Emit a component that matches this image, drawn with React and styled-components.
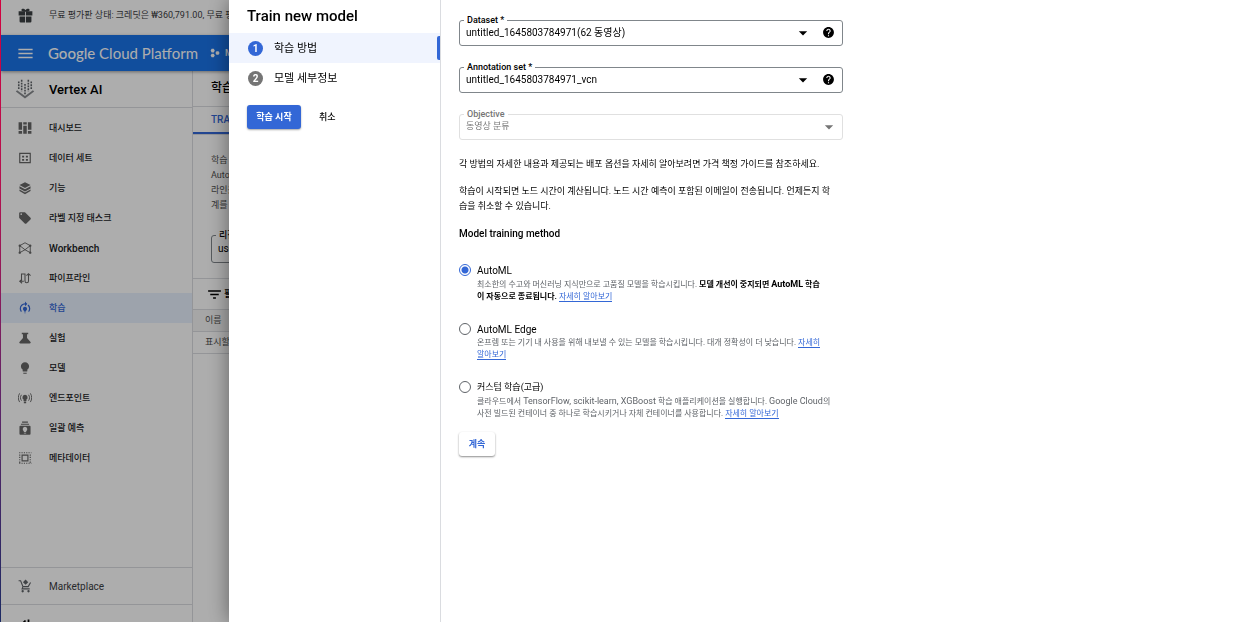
import { useState } from "react";
import styled, { createGlobalStyle } from "styled-components";
import {
  MdArrowDropDown,
  MdFilterList,
  MdHelp,
  MdLightbulb,
  MdLocalOffer,
  MdMenu,
  MdModelTraining,
} from "react-icons/md";

const GiftIcon = () => (
  <Svg viewBox="0 0 24 24">
    <path d="M1 5h10.300v7H1zM12.700 5H23v7H12.700zM2.500 13.500h8.800V23h-7a2 2 0 0 1-1.800-2zM12.700 13.500h8.800V21a2 2 0 0 1-1.800 2h-7z" />
    <path d="M12 6C8 6 5 5 5.500 2.800S10 .8 12 3.500c2-2.700 6-2.900 6.500-.7S16 6 12 6z" />
  </Svg>
);

const ProjectIcon = () => (
  <Svg viewBox="0 0 24 24">
    <path d="M4 2h5l2.500 4.200L9 10.500H4L1.500 6.200zM4 13.500h5l2.500 4.200L9 22H4l-2.500-4.300zM15.500 7.500h5l2.500 4.400-2.500 4.300h-5L13 11.900z" />
  </Svg>
);

const VertexIcon = () => (
  <Svg viewBox="0 0 24 24">
    <path
      d="M4.500 3v10M8 1v14M12 6v13M16 1v14M19.500 3v10"
      fill="none"
      stroke="currentColor"
      strokeWidth="1.900"
      strokeDasharray="2.200 1.200"
    />
    <path d="M1 15l11 8.500L23 15l-1.500-1.500L12 20.500l-9.500-7z" opacity=".75" />
  </Svg>
);

const DashboardIcon = () => (
  <Svg viewBox="0 0 24 24">
    <path d="M1 2h6v13H1zM1 17h6v5H1zM9 2h6v4H9zM9 8h6v14H9zM17 2h6v13h-6zM17 17h6v5h-6z" />
  </Svg>
);

const DatasetIcon = () => (
  <Svg viewBox="0 0 24 24">
    <path d="M2 3h20v18H2zM4 5v14h16V5z" fillRule="evenodd" />
    <path d="M7 8h3.500v3H7zM13.500 8H17v3h-3.500zM7 13.500h3.500v3H7zM13.500 13.500H17v3h-3.500z" />
  </Svg>
);

const FeatureIcon = () => (
  <Svg viewBox="0 0 24 24">
    <path d="M12 2l9.500 5-9.500 5.200L2.500 7z" />
    <path d="M2.500 9l9.500 5.200L21.500 9v3.800L12 18l-9.500-5.200zM2.500 14.500l9.500 5 9.500-5v2.800L12 22.500l-9.500-5.200z" />
  </Svg>
);

const WorkbenchIcon = () => (
  <Svg viewBox="0 0 24 24">
    <g fill="none" stroke="currentColor" strokeWidth="1.600">
      <path d="M3 8l9-5 9 5v12l-9-5-9 5zM3 8l9 7 9-7" />
    </g>
    <circle cx="3" cy="8" r="2" />
    <circle cx="21" cy="8" r="2" />
    <circle cx="3" cy="20" r="2" />
    <circle cx="21" cy="20" r="2" />
  </Svg>
);

const PipelineIcon = () => (
  <Svg viewBox="0 0 24 24">
    <g fill="none" stroke="currentColor" strokeWidth="1.800">
      <path d="M6 17V5h6v12a3 3 0 0 0 6 0V5M14.500 8L18 4.500 21.500 8M7 14l-4 3.500L7 21M3 17.500h7" />
    </g>
  </Svg>
);

const FlaskIcon = () => (
  <Svg viewBox="0 0 24 24">
    <path d="M6.500 3h11v2.500h-2V12l6 7c.8 1.200 0 2.500-1.500 2.500H4c-1.500 0-2.300-1.300-1.500-2.500l6-7V5.500h-2z" />
  </Svg>
);

const EndpointIcon = () => (
  <Svg viewBox="0 0 24 24">
    <path d="M12 6.500a4.500 4.500 0 0 0-2.500 8.200V17h5v-2.300A4.500 4.500 0 0 0 12 6.500zM10 18h4v3h-4z" />
    <g fill="none" stroke="currentColor" strokeWidth="1.600">
      <path d="M6 6.500c-2.400 3-2.400 7 0 10M18 6.500c2.400 3 2.400 7 0 10M2.800 4c-3 4.500-3 10.500 0 15M21.200 4c3 4.500 3 10.500 0 15" />
    </g>
  </Svg>
);

const BatchIcon = () => (
  <Svg viewBox="0 0 24 24">
    <path d="M7 1h10v2H7zM5 4.500h14v2H5z" />
    <path
      fillRule="evenodd"
      d="M4 8h16a1.500 1.500 0 0 1 1.500 1.500V22a1.500 1.500 0 0 1-1.500 1.500H4A1.500 1.500 0 0 1 2.500 22V9.500A1.500 1.500 0 0 1 4 8zm8 2a4 4 0 0 0-2 7.400V19h4v-1.600A4 4 0 0 0 12 10zM10 20v1.500h4V20z"
    />
  </Svg>
);

const MetadataIcon = () => (
  <Svg viewBox="0 0 24 24" fill="none" stroke="currentColor" strokeWidth="2">
    <path d="M7 7h10v10H7z" />
    <path d="M2 3h21M2 21h21M3 6v14M21 6v14" strokeDasharray="2 2" />
  </Svg>
);

const CartIcon = () => (
  <Svg viewBox="0 0 24 24">
    <path
      d="M1 3h3.500l4 10h9l4-7M8.500 13L7 17h13"
      fill="none"
      stroke="currentColor"
      strokeWidth="1.900"
    />
    <path d="M13 1l4.500 4.500L13 10 8.500 5.500z" />
    <circle cx="8" cy="21" r="2" />
    <circle cx="18" cy="21" r="2" />
  </Svg>
);

const CollapseIcon = () => (
  <Svg viewBox="0 0 24 24" fill="none" stroke="currentColor" strokeWidth="3.500">
    <path d="M13 3l-9 9 9 9M19 1v22" />
  </Svg>
);

const navItems = [
  { label: "대시보드", icon: DashboardIcon },
  { label: "데이터 세트", icon: DatasetIcon },
  { label: "기능", icon: FeatureIcon },
  { label: "라벨 지정 태스크", icon: MdLocalOffer },
  { label: "Workbench", icon: WorkbenchIcon, latin: true },
  { label: "파이프라인", icon: PipelineIcon },
  { label: "학습", icon: MdModelTraining, active: true },
  { label: "실험", icon: FlaskIcon },
  { label: "모델", icon: MdLightbulb },
  { label: "엔드포인트", icon: EndpointIcon },
  { label: "일괄 예측", icon: BatchIcon },
  { label: "메타데이터", icon: MetadataIcon },
];

const SelectField = ({ id, label, value, help, disabled }) => (
  <Field $disabled={disabled}>
    <FieldLabel htmlFor={id}>{label}</FieldLabel>
    <Select id={id} disabled={disabled} defaultValue={value}>
      <option>{value}</option>
    </Select>
    <MdArrowDropDown size={20} />
    {help && (
      <HelpButton type="button" aria-label={`${label} help`}>
        <MdHelp size={13} />
      </HelpButton>
    )}
  </Field>
);

const MethodOption = ({ id, title, latin, checked, onSelect, children }) => (
  <Option>
    <Radio type="radio" name="method" id={id} checked={checked} onChange={() => onSelect(id)} />
    <div>
      <OptionTitle htmlFor={id} $latin={latin}>{title}</OptionTitle>
      <Description>{children}</Description>
    </div>
  </Option>
);

const Console = () => (
  <ConsolePage>
    <PromoBar>
      <IconSlot><GiftIcon /></IconSlot>
      <span>무료 평가판 상태: 크레딧은 ₩360,791.00, 무료 평가판</span>
    </PromoBar>
    <TopBar>
      <MenuButton type="button" aria-label="menu"><MdMenu size={19} /></MenuButton>
      <Logo href="#"><b>Google</b> Cloud Platform</Logo>
      <Project type="button"><ProjectIcon /> My</Project>
    </TopBar>
    <Body>
      <Sidebar>
        <ProductName>
          <IconSlot $size={20}><VertexIcon /></IconSlot>
          Vertex AI
        </ProductName>
        <NavList>
          {navItems.map(({ label, icon: Icon, active, latin }) => (
            <NavLink key={label} href="#" $active={active} $latin={latin}>
              <IconSlot><Icon /></IconSlot>
              {label}
            </NavLink>
          ))}
        </NavList>
        <Marketplace href="#">
          <IconSlot><CartIcon /></IconSlot>
          Marketplace
        </Marketplace>
        <CollapseButton type="button" aria-label="collapse">
          <CollapseIcon />
        </CollapseButton>
      </Sidebar>
      <Content>
        <PageTitle>학습</PageTitle>
        <Tabs><Tab type="button">TRAINING</Tab></Tabs>
        <Intro>학습<br />AutoML<br />라인을<br />계를</Intro>
        <Region>
          <FieldLabel htmlFor="region">리전</FieldLabel>
          <Select id="region" defaultValue="us-central1">
            <option>us-central1</option>
          </Select>
        </Region>
        <Filter><MdFilterList size={17} /> 필터</Filter>
        <Table>
          <thead><tr><th>이름</th></tr></thead>
          <tbody><tr><td>표시할</td></tr></tbody>
        </Table>
      </Content>
    </Body>
  </ConsolePage>
);

const App = () => {
  const [method, setMethod] = useState("automl");

  return (
    <>
      <GlobalStyle />
      <Screen>
        <Edge />
        <Console />
      </Screen>
      <Scrim />
      <Dialog role="dialog" aria-labelledby="dialog-title">
        <Steps>
          <DialogTitle id="dialog-title">Train new model</DialogTitle>
          <Step type="button" $active>
            <StepNumber $active>1</StepNumber>
            학습 방법
          </Step>
          <Step type="button">
            <StepNumber>2</StepNumber>
            모델 세부정보
          </Step>
          <Actions>
            <StartButton type="button">학습 시작</StartButton>
            <CancelButton type="button">취소</CancelButton>
          </Actions>
        </Steps>
        <Form onSubmit={(ev) => ev.preventDefault()}>
          <Fields>
            <SelectField id="dataset" label="Dataset *" value="untitled_1645803784971(62 동영상)" help />
            <SelectField id="annotation" label="Annotation set *" value="untitled_1645803784971_vcn" help />
            <SelectField id="objective" label="Objective" value="동영상 분류" disabled />
          </Fields>
          <Paragraph>
            각 방법의 자세한 내용과 제공되는 배포 옵션을 자세히 알아보려면 가격 책정 가이드를 참조하세요.
          </Paragraph>
          <Paragraph>
            학습이 시작되면 노드 시간이 계산됩니다. 노드 시간 예측이 포함된 이메일이 전송됩니다. 언제든지 학<br />
            습을 취소할 수 있습니다.
          </Paragraph>
          <Heading>Model training method</Heading>
          <Options>
            <MethodOption id="automl" title="AutoML" latin checked={method === "automl"} onSelect={setMethod}>
              최소한의 수고와 머신러닝 지식만으로 고품질 모델을 학습시킵니다.{" "}
              <b>모델 개선이 중지되면 <Latin>AutoML</Latin> 학습<br />이 자동으로 종료됩니다.</b>{" "}
              <Link href="#">자세히 알아보기</Link>
            </MethodOption>
            <MethodOption id="edge" title="AutoML Edge" latin checked={method === "edge"} onSelect={setMethod}>
              온프렘 또는 기기 내 사용을 위해 내보낼 수 있는 모델을 학습시킵니다. 대개 정확성이 더 낮습니다.{" "}
              <Link href="#">자세히<br />알아보기</Link>
            </MethodOption>
            <MethodOption id="custom" title="커스텀 학습(고급)" checked={method === "custom"} onSelect={setMethod}>
              클라우드에서 <Latin>TensorFlow, scikit-learn, XGBoost</Latin> 학습 애플리케이션을 실행합니다.{" "}
              <Latin>Google Cloud</Latin>의<br />
              사전 빌드된 컨테이너 중 하나로 학습시키거나 자체 컨테이너를 사용합니다.{" "}
              <Link href="#">자세히 알아보기</Link>
            </MethodOption>
          </Options>
          <ContinueButton type="submit">계속</ContinueButton>
        </Form>
      </Dialog>
    </>
  );
};

const GlobalStyle = createGlobalStyle`
  * {
    box-sizing: border-box;
  }
  body {
    margin: 0;
    overflow: hidden;
    background: #fff;
    color: #000;
    font-family: Roboto, "Noto Sans CJK KR", sans-serif;
    font-size: 9px;
    line-height: 15px;
  }
  button, select, input {
    font-family: inherit;
    font-size: inherit;
    line-height: inherit;
    color: inherit;
    margin: 0;
    padding: 0;
    border: 0;
    background: none;
  }
  a {
    color: inherit;
    text-decoration: none;
  }
  svg {
    flex: none;
  }
`;
const Svg = styled.svg.attrs((props) => ({ fill: props.fill || "currentColor" }))`
  width: 1em;
  height: 1em;
`;

/* console behind the dialog */
const Screen = styled.div`
  display: flex;
  height: 100vh;
  overflow: hidden;
`;
const Edge = styled.div`
  position: relative;
  z-index: 3;
  width: 1px;
  background: linear-gradient(#d3003f, #b5104e 30%, #5d2468 65%, #1c2a63);
`;
const ConsolePage = styled.div`
  flex: 1;
  min-width: 0;
  display: flex;
  flex-direction: column;
  white-space: nowrap;
`;
const IconSlot = styled.span`
  display: flex;
  justify-content: center;
  flex: none;
  width: 20px;
  margin-right: 14px;
  font-size: ${({ $size }) => $size || 14}px;
  color: #5f6368;
`;
const PromoBar = styled.div`
  display: flex;
  align-items: center;
  height: 35px;
  padding: 0 14px;
  padding-bottom: 4px;
  color: #3c4043;

  ${IconSlot} {
    font-size: 15px;
    color: #3c4043;
  }
`;
const TopBar = styled.header`
  position: relative;
  display: flex;
  align-items: center;
  height: 36px;
  padding: 0 14px;
  background: #1a73e8;
  box-shadow: 0 1px 3px rgba(0, 0, 0, 0.4);
  color: #fff;
`;
const MenuButton = styled.button`
  display: flex;
  justify-content: center;
  width: 20px;
  margin-right: 13px;
`;
const Logo = styled.a`
  width: 162px;
  font-family: Lato, Roboto, sans-serif;
  font-size: 15px;

  b {
    font-weight: 500;
  }
`;
const Project = styled.button`
  display: flex;
  align-items: center;
  gap: 5px;
  font-weight: 500;

  svg {
    font-size: 10px;
  }
`;
const Body = styled.div`
  flex: 1;
  display: flex;
  min-height: 0;
`;
const Sidebar = styled.aside`
  display: flex;
  flex-direction: column;
  flex: none;
  width: 192px;
  border-right: 1px solid #dadce0;
`;
const ProductName = styled.div`
  display: flex;
  align-items: center;
  height: 37px;
  padding-left: 14px;
  border-bottom: 1px solid #dadce0;
  font-size: 13px;
  font-weight: 500;
`;
const NavList = styled.nav`
  flex: 1;
  padding-top: 5px;
`;
const NavLink = styled.a`
  display: flex;
  align-items: center;
  height: 30px;
  padding-left: 14px;
  font-size: ${({ $latin }) => ($latin ? 10 : 9)}px;
  font-weight: 500;
  color: ${({ $active }) => ($active ? "#3367d6" : "#202124")};
  background: ${({ $active }) => ($active ? "#e8f0fe" : "none")};

  ${IconSlot} {
    color: ${({ $active }) => ($active ? "#3367d6" : "#666")};
  }
`;
const Marketplace = styled.a`
  display: flex;
  align-items: center;
  height: 37px;
  padding-left: 14px;
  border-top: 1px solid #dadce0;
  font-size: 10px;
  color: #3c4043;
`;
const CollapseButton = styled.button`
  display: flex;
  height: 18px;
  padding: 14px 0 0 18px;
  border-top: 1px solid #dadce0;
  overflow: hidden;
  font-size: 12px;
`;
const Content = styled.main`
  flex: 1;
  min-width: 0;
`;
const PageTitle = styled.h1`
  margin: 0;
  padding: 0 18px;
  border-bottom: 1px solid #dadce0;
  font-size: 12px;
  font-weight: 500;
  line-height: 35px;
`;
const Tabs = styled.div`
  display: flex;
  border-bottom: 1px solid #dadce0;
`;
const Tab = styled.button`
  padding: 0 18px;
  border-bottom: 2px solid #3367d6;
  color: #3367d6;
  font-size: 10px;
  font-weight: 500;
  line-height: 25px;
`;
const Intro = styled.p`
  margin: 18px;
  color: #505050;
`;
const Filter = styled.div`
  display: flex;
  align-items: center;
  gap: 1px;
  height: 31px;
  margin-top: 15px;
  padding-left: 13px;
  border-top: 1px solid #dadce0;
  font-weight: 500;
`;
const Table = styled.table`
  width: 100%;
  border-collapse: collapse;
  text-align: left;
  color: #505050;

  th, td {
    height: 22px;
    padding: 0 12px;
    border-top: 1px solid #dadce0;
    border-bottom: 1px solid #dadce0;
  }
  th {
    background: #f5f5f5;
    font-weight: 400;
  }
`;

/* dialog */
const Scrim = styled.div`
  position: fixed;
  inset: 0;
  z-index: 2;
  background: rgba(0, 0, 0, 0.32);
`;
const Dialog = styled.section`
  position: fixed;
  z-index: 4;
  top: 0;
  right: 0;
  bottom: 0;
  left: 229px;
  display: flex;
  background: #fff;
  box-shadow: 0 0 20px rgba(0, 0, 0, 0.45);
`;
const Steps = styled.div`
  flex: none;
  width: 212px;
  border-right: 1px solid #dadce0;
`;
const DialogTitle = styled.h2`
  margin: 0;
  padding: 1px 18px 2px;
  font-size: 15px;
  font-weight: 500;
  line-height: 30px;
`;
const Step = styled.button`
  display: flex;
  align-items: center;
  gap: 11px;
  width: 100%;
  height: 30px;
  padding-left: 19px;
  font-size: 11px;
  background: ${({ $active }) => ($active ? "#f0f4fe" : "none")};

  &::after {
    content: "";
    width: 3px;
    height: 24px;
    margin-left: auto;
    border-radius: 2px 0 0 2px;
    background: ${({ $active }) => ($active ? "#3367d6" : "none")};
  }
`;
const StepNumber = styled.span`
  width: 15px;
  border-radius: 50%;
  background: ${({ $active }) => ($active ? "#3367d6" : "#757575")};
  color: #fff;
  font-size: 10px;
  font-weight: 700;
  text-align: center;
`;
const Actions = styled.div`
  display: flex;
  gap: 18px;
  padding: 12px 18px;
`;
const StartButton = styled.button`
  width: 54px;
  height: 24px;
  border-radius: 3px;
  background: #3367d6;
  box-shadow: 0 1px 2px rgba(0, 0, 0, 0.35);
  color: #fff;
  font-weight: 700;
`;
const CancelButton = styled.button`
  font-weight: 500;
`;
const Form = styled.form`
  flex: 1;
  max-width: 420px;
  padding: 20px 18px;
`;
const Fields = styled.div`
  display: grid;
  gap: 21px;
  margin-bottom: 17px;
`;
const Field = styled.div`
  position: relative;
  display: flex;
  align-items: center;
  height: 26px;
  padding: 0 7px 1px 6px;
  border: 1px solid ${({ $disabled }) => ($disabled ? "#e0e0e0" : "#80868b")};
  border-radius: 3px;
  font-size: ${({ $disabled }) => ($disabled ? 9 : 10)}px;
  color: ${({ $disabled }) => ($disabled ? "#757575" : "#000")};

  & > svg {
    margin-right: ${({ $disabled }) => ($disabled ? -4 : 9)}px;
  }
`;
const FieldLabel = styled.label`
  position: absolute;
  top: -6px;
  left: 4px;
  padding: 0 3px;
  background: #fff;
  font-size: 9px;
  font-weight: 500;
  line-height: 10px;
`;
const Select = styled.select`
  flex: 1;
  min-width: 0;
  appearance: none;
  opacity: 1;
  outline: none;
`;
const HelpButton = styled.button`
  display: flex;
`;
const Region = styled(Field)`
  width: 180px;
  height: 28px;
  margin: 0 18px;
  margin-top: 22px;
`;
const Paragraph = styled.p`
  margin: 0;
  margin-bottom: 12px;
  white-space: nowrap;
`;
const Heading = styled.h3`
  margin: 0;
  margin-bottom: 22px;
  font-size: 10px;
  font-weight: 500;
`;
const Options = styled.div`
  display: grid;
  gap: 19px;
  margin-bottom: 12px;
`;
const Option = styled.div`
  display: flex;
  gap: 6px;
`;
const Radio = styled.input`
  appearance: none;
  flex: none;
  width: 12px;
  height: 12px;
  margin-top: 1px;
  border: 1px solid #5f6368;
  border-radius: 50%;

  &:checked {
    border-color: #3367d6;
    background: radial-gradient(#3367d6 3px, #fff 4px);
  }
`;
const OptionTitle = styled.label`
  display: block;
  font-size: ${({ $latin }) => ($latin ? 10 : 9)}px;
`;
const Description = styled.p`
  margin: 0;
  color: #5f6368;
  font-size: 8px;
  line-height: 12px;
  white-space: nowrap;

  b {
    color: #000;
  }
`;
const Latin = styled.span`
  font-size: 9px;
`;
const Link = styled.a`
  color: #3367d6;
  border-bottom: 1px solid #3367d6;
`;
const ContinueButton = styled.button`
  width: 36px;
  height: 24px;
  border-radius: 3px;
  box-shadow: 0 1px 2px rgba(0, 0, 0, 0.45);
  color: #3367d6;
  font-weight: 700;
`;

export default App;
